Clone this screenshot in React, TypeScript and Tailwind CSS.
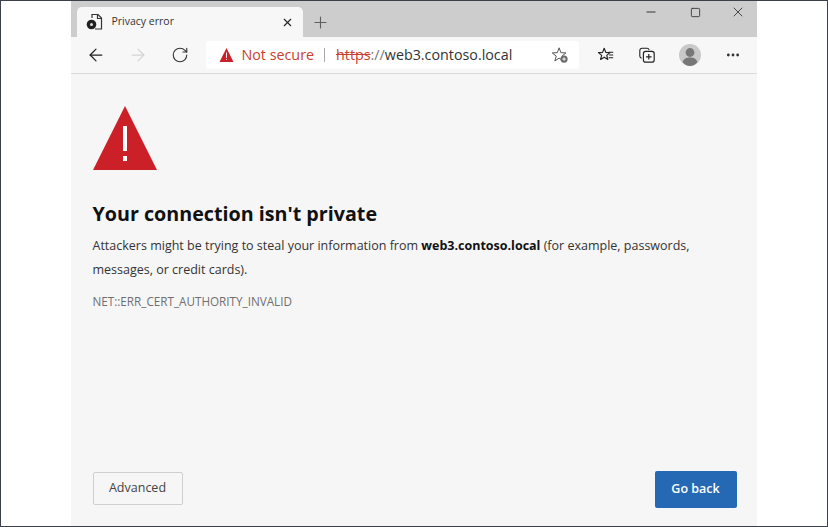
import React from 'react';
import { X, Plus, ArrowLeft, ArrowRight, RotateCw, Minus, Square, MoreHorizontal } from 'lucide-react';

const font = "font-['Open_Sans','Noto_Sans',sans-serif]";

const Triangle: React.FC<{ className?: string }> = ({ className }) => (
  <svg viewBox="0 0 64 64" className={className}>
    <path d="M32 0 L64 64 L0 64 Z" fill="#cb2027" />
    <rect x="30" y="20" width="4" height="25" fill="#fff" />
    <rect x="30" y="50" width="4" height="5" fill="#fff" />
  </svg>
);

const PageIcon = () => (
  <svg viewBox="0 0 18 18" className="w-[18px] h-[18px]" fill="none">
    <path d="M6 5V1.5h6l3.5 3.5v11H9" stroke="#333" strokeWidth="1.2" />
    <path d="M11.5 1.5V5.5h4" stroke="#333" strokeWidth="1.2" />
    <circle cx="5.5" cy="11.5" r="4.8" fill="#222" />
    <circle cx="5.5" cy="11.5" r="1.5" fill="#ddd" />
  </svg>
);

const FavAdd = () => (
  <svg viewBox="0 0 20 20" className="w-[18px] h-[18px]" fill="none">
    <path d="M9 2l2 5.4 5.6.3-4.4 3.5 1.5 5.4L9 13.5l-4.7 3.1 1.5-5.4L1.4 7.7 7 7.4z" stroke="#555" strokeWidth="1.1" strokeLinejoin="round" />
    <circle cx="14.5" cy="14.5" r="4" fill="#6b6b6b" />
    <path d="M12.5 14.5h4M14.5 12.5v4" stroke="#fff" strokeWidth="1" />
  </svg>
);

const Favorites = () => (
  <svg viewBox="0 0 20 20" className="w-[18px] h-[18px]" fill="none">
    <path d="M8 2.5l1.8 4.6 4.6.3-3.6 3 1.2 4.6L8 12.4 4 15l1.2-4.6-3.6-3 4.6-.3z" stroke="#222" strokeWidth="1.3" strokeLinejoin="round" />
    <path d="M13 7h5M13.5 10h4.5M13 13h5" stroke="#222" strokeWidth="1.2" />
  </svg>
);

const Collections = () => (
  <svg viewBox="0 0 20 20" className="w-[18px] h-[18px]" fill="none">
    <path d="M4 13.5C2.5 13 2 12 2 11V5c0-1.5 1-2.5 2.5-2.5H10c1 0 2 .5 2.5 2" stroke="#222" strokeWidth="1.2" />
    <rect x="6" y="6" width="12" height="12" rx="2.5" stroke="#222" strokeWidth="1.3" />
    <path d="M12 9v6M9 12h6" stroke="#222" strokeWidth="1.3" />
  </svg>
);

const Avatar = () => (
  <svg viewBox="0 0 22 22" className="w-[22px] h-[22px]">
    <circle cx="11" cy="11" r="11" fill="#c9c9c9" />
    <circle cx="11" cy="8.5" r="4.4" fill="#777" />
    <path d="M3.6 18c1-3.4 3.6-4.6 7.4-4.6s6.4 1.2 7.4 4.6c-2 2.5-4.6 4-7.4 4s-5.4-1.5-7.4-4z" fill="#777" />
  </svg>
);

const App: React.FC = () => {
  return (
    <div className={`w-[828px] h-[527px] bg-white border border-[#3c4048] flex justify-center overflow-hidden ${font}`}>
      <div className="w-[686px] ml-[-1px] flex flex-col h-full">
        {/* tab strip */}
        <div className="h-[36px] bg-[#cdcdcd] flex shrink-0 pt-[6px] pl-[6px]">
          <div className="w-[226px] h-[30px] bg-[#f7f7f7] rounded-t-[5px] flex items-center pl-[9px] pr-[9px]">
            <PageIcon />
            <span className="ml-[8px] text-[10.5px] text-[#333] flex-1">Privacy error</span>
            <X size={13} strokeWidth={2} className="text-[#222]" />
          </div>
          <div className="ml-[8px] h-[30px] flex items-center">
            <Plus size={19} strokeWidth={1.4} className="text-[#5f5f5f]" />
          </div>
          <div className="flex-1 flex justify-end pr-[11px] h-[12px] mt-[-1px] items-center">
            <Minus size={14} strokeWidth={1.7} className="text-[#333]" />
            <Square size={11} strokeWidth={1.9} className="text-[#333] ml-[32px]" />
            <X size={16} strokeWidth={1.3} className="text-[#333] ml-[29px]" />
          </div>
        </div>
        {/* toolbar */}
        <div className="h-[37px] bg-[#f7f7f7] border-b border-[#d9d9d9] flex items-center shrink-0">
          <ArrowLeft size={20} strokeWidth={1.5} className="ml-[15px] text-[#222]" />
          <ArrowRight size={20} strokeWidth={1.5} className="ml-[22px] text-[#d4d4d4]" />
          <RotateCw size={18} strokeWidth={1.5} className="ml-[23px] text-[#333]" />
          <div className="ml-[17px] w-[373px] h-[28px] bg-white rounded-[3px] flex items-center pl-[13px] pr-[10px] text-[14.3px]">
            <Triangle className="w-[15px] h-[14px]" />
            <span className="ml-[8px] text-[#c8402f]">Not secure</span>
            <span className="ml-[10px] w-px h-[14px] bg-[#aaa]" />
            <span className="ml-[11px] text-[#c8402f] line-through">https</span>
            <span className="text-[#777]">://</span>
            <span className="text-[#333] flex-1">web3.contoso.local</span>
            <FavAdd />
          </div>
          <div className="ml-[18px]"><Favorites /></div>
          <div className="ml-[23px]"><Collections /></div>
          <div className="ml-[23px]"><Avatar /></div>
          <MoreHorizontal size={16} strokeWidth={2.2} className="ml-[24px] text-[#333]" />
        </div>
        {/* page */}
        <div className="flex-1 bg-[#f6f6f6] pl-[22px] pr-[20px] pt-[32px] pb-[18px] flex flex-col">
          <Triangle className="w-[64px] h-[64px]" />
          <h1 className="mt-[30px] text-[19.7px] leading-[28px] font-bold text-[#111]">Your connection isn't private</h1>
          <p className="mt-[6px] text-[12.5px] leading-[24px] text-[#333]">
            Attackers might be trying to steal your information from <b className="font-bold text-[#111]">web3.contoso.local</b> (for example, passwords, messages, or credit cards).
          </p>
          <p className="mt-[10px] text-[11.7px] leading-[18px] text-[#6f6f6f]">NET::ERR_CERT_AUTHORITY_INVALID</p>
          <div className="mt-auto flex justify-between items-start">
            <button className="mt-[1px] w-[90px] h-[33px] border border-[#cfcfcf] rounded-[2px] bg-[#f6f6f6] text-[12.5px] text-[#444]">Advanced</button>
            <button className="w-[82px] h-[37px] rounded-[2px] bg-[#2569b5] text-[12.5px] font-semibold text-white">Go back</button>
          </div>
        </div>
      </div>
    </div>
  );
};

export default App;
